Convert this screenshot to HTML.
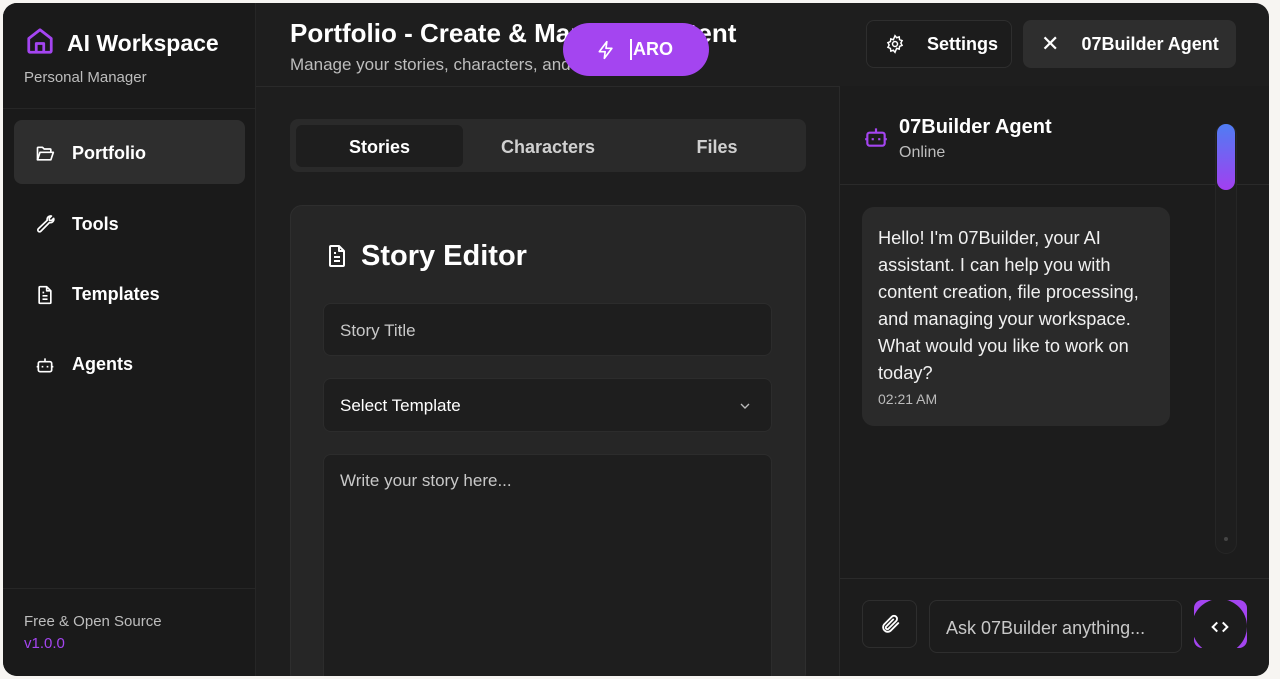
<!DOCTYPE html>
<html style="overflow:hidden"><head><meta charset="utf-8"><style>
*{box-sizing:border-box;margin:0;padding:0}
body{width:1280px;height:679px;background:#f7f5f2;font-family:"Liberation Sans",sans-serif;color:#fff;overflow:hidden;position:relative}
.app{position:absolute;left:3px;top:3px;width:1266px;height:673px;background:#1e1e1e;border-radius:14px;overflow:hidden}
.side{position:absolute;left:0;top:0;width:253px;height:100%;background:#1a1a1a;border-right:1px solid #262626}
.abs{position:absolute}
.nav{position:absolute;left:11px;width:231px;height:64px;border-radius:8px;display:flex;align-items:center;padding-left:21px;padding-top:3px;font-size:18px;font-weight:bold}
.nav svg{margin-right:17px}
.nav.act{background:#2e2e2e}
.btn{position:absolute;top:17px;height:48px;border-radius:8px;display:flex;align-items:center;font-size:18px;font-weight:bold}
.inp{position:absolute;left:320px;width:449px;background:#1e1e1e;border:1px solid #2c2c2c;border-radius:8px;font-size:17px;color:#c8c8c8;padding-left:16px;display:flex;align-items:center}
</style></head><body>
<div class="app">
<div class="side">
 <svg class="abs" style="left:22px;top:23px" width="30" height="30" viewBox="0 0 24 24" fill="none" stroke="#a445f0" stroke-width="2.2" stroke-linejoin="round"><path d="M3 10 12 3l9 7v10a1 1 0 0 1-1 1H4a1 1 0 0 1-1-1z"/><path d="M9 21v-7h6v7"/></svg>
 <div class="abs" style="left:64px;top:27px;font-size:23px;font-weight:bold">AI Workspace</div>
 <div class="abs" style="left:21px;top:66px;font-size:15px;color:#bdbdbd">Personal Manager</div>
 <div class="abs" style="left:0;top:105px;width:253px;border-top:1px solid #262626"></div>
 <div class="nav act" style="top:117px"><svg width="20" height="20" viewBox="0 0 24 24" fill="none" stroke="#fff" stroke-width="2" stroke-linejoin="round"><path d="M3 19V5a1 1 0 0 1 1-1h5l2 2h7a1 1 0 0 1 1 1v2"/><path d="M3 19l3-9h16l-3 9z"/></svg>Portfolio</div>
 <div class="nav" style="top:188px"><svg width="20" height="20" viewBox="0 0 24 24" fill="none" stroke="#fff" stroke-width="2" stroke-linejoin="round"><path d="M14.7 6.3a4 4 0 0 1 5-5l-2.7 2.7.3 2.4 2.4.3 2.7-2.7a4 4 0 0 1-5 5L7 19.5a2 2 0 0 1-3-3z"/></svg>Tools</div>
 <div class="nav" style="top:258px"><svg width="20" height="20" viewBox="0 0 24 24" fill="none" stroke="#fff" stroke-width="2" stroke-linejoin="round"><path d="M14 2H6a1 1 0 0 0-1 1v18a1 1 0 0 0 1 1h12a1 1 0 0 0 1-1V7z"/><path d="M14 2v5h5M9 13h6M9 17h6M9 9h2"/></svg>Templates</div>
 <div class="nav" style="top:328px"><svg width="20" height="20" viewBox="0 0 24 24" fill="none" stroke="#fff" stroke-width="2" stroke-linejoin="round"><rect x="4" y="8" width="16" height="12" rx="2"/><path d="M12 8V4M2 14h2M20 14h2M9 13v2M15 13v2"/></svg>Agents</div>
 <div class="abs" style="left:0;top:585px;width:253px;border-top:1px solid #262626"></div>
 <div class="abs" style="left:21px;top:610px;font-size:15px;color:#bdbdbd">Free &amp; Open Source</div>
 <div class="abs" style="left:21px;top:632px;font-size:15px;color:#a445f0">v1.0.0</div>
</div>
<!-- header -->
<div class="abs" style="left:287px;top:15px;font-size:26px;font-weight:bold;white-space:nowrap">Portfolio - Create &amp; Manage Content</div>
<div class="abs" style="left:287px;top:52px;font-size:17px;color:#bdbdbd;white-space:nowrap">Manage your stories, characters, and files</div>
<div class="abs" style="left:560px;top:20px;width:146px;height:53px;border-radius:27px;background:#a445f0;display:flex;align-items:center;font-size:18px;font-weight:bold"><svg style="margin-left:33px" width="20" height="20" viewBox="0 0 24 24" fill="none" stroke="#fff" stroke-width="2" stroke-linejoin="round"><path d="M13 2 4 14h7l-1 8 9-12h-7z"/></svg><span style="margin-left:14px;border-left:2px solid #fff;padding-left:1px">ARO</span></div>
<div class="btn" style="left:863px;width:146px;border:1px solid #2e2e2e;background:#1c1c1c"><svg style="margin:0 22px 0 18px" width="20" height="20" viewBox="0 0 24 24" fill="none" stroke="#fff" stroke-width="1.8"><circle cx="12" cy="12" r="3"/><path d="M12 2l2 2.5 3-1 .5 3.2 3 1.3-1.5 2.8 1.5 2.8-3 1.3-.5 3.2-3-1L12 22l-2-2.5-3 1-.5-3.2-3-1.3L5 13.2 3.5 10.4l3-1.3L7 5.9l3 1z"/></svg>Settings</div>
<div class="btn" style="left:1020px;width:213px;background:#2e2e2e"><span style="margin:0 22px 0 18px;font-size:22px;font-weight:normal">✕</span>07Builder Agent</div>
<div class="abs" style="left:253px;top:83px;width:1013px;border-top:1px solid #2a2a2a"></div>
<!-- main -->
<div class="abs" style="left:287px;top:116px;width:516px;height:53px;background:#2a2a2a;border-radius:8px"></div>
<div class="abs" style="left:293px;top:122px;width:167px;height:42px;background:#1e1e1e;border-radius:6px"></div>
<div class="abs" style="left:293px;top:134px;width:167px;text-align:center;font-size:18px;font-weight:bold">Stories</div>
<div class="abs" style="left:460px;top:134px;width:170px;text-align:center;font-size:18px;font-weight:bold;color:#d0d0d0">Characters</div>
<div class="abs" style="left:630px;top:134px;width:168px;text-align:center;font-size:18px;font-weight:bold;color:#d0d0d0">Files</div>
<div class="abs" style="left:287px;top:202px;width:516px;height:480px;background:#262626;border:1px solid #2e2e2e;border-radius:12px"></div>
<svg class="abs" style="left:322px;top:241px" width="24" height="24" viewBox="0 0 24 24" fill="none" stroke="#fff" stroke-width="2" stroke-linejoin="round"><path d="M14 2H6a1 1 0 0 0-1 1v18a1 1 0 0 0 1 1h12a1 1 0 0 0 1-1V7z"/><path d="M14 2v5h5M9 13h6M9 17h6M9 9h2"/></svg>
<div class="abs" style="left:358px;top:237px;font-size:29px;font-weight:bold">Story Editor</div>
<div class="inp" style="top:300px;height:53px;padding-top:2px">Story Title</div>
<div class="inp" style="top:375px;height:54px;color:#fff;padding-top:2px">Select Template<svg style="position:absolute;right:18px" width="16" height="16" viewBox="0 0 24 24" fill="none" stroke="#bbb" stroke-width="2"><path d="M6 9l6 6 6-6"/></svg></div>
<div class="inp" style="top:451px;height:240px;align-items:flex-start;padding-top:16px">Write your story here...</div>
<!-- chat -->
<div class="abs" style="left:836px;top:83px;width:430px;height:590px;background:#1c1c1c;border-left:1px solid #2a2a2a"></div>
<svg class="abs" style="left:860px;top:121px" width="26" height="26" viewBox="0 0 24 24" fill="none" stroke="#a445f0" stroke-width="2" stroke-linejoin="round"><rect x="4" y="8" width="16" height="12" rx="2"/><path d="M12 8V4M2 14h2M20 14h2M9 13v2M15 13v2"/></svg>
<div class="abs" style="left:896px;top:113px;font-size:20px;font-weight:bold">07Builder Agent</div>
<div class="abs" style="left:896px;top:141px;font-size:16px;color:#bdbdbd">Online</div>
<div class="abs" style="left:836px;top:181px;width:430px;border-top:1px solid #2a2a2a"></div>
<div class="abs" style="left:1212px;top:121px;width:22px;height:430px;border-radius:11px;background:#1e1e1e;border:1px solid #262626"></div>
<div class="abs" style="left:1214px;top:121px;width:18px;height:66px;border-radius:9px;background:linear-gradient(#4f7df3,#a23ff0)"></div>
<div class="abs" style="left:1221px;top:534px;width:4px;height:4px;border-radius:2px;background:#444"></div>
<div class="abs" style="left:859px;top:204px;width:308px;height:219px;background:#2a2a2a;border-radius:12px;padding:18px 6px 18px 16px;font-size:18.2px;line-height:27px;color:#f0f0f0">Hello! I'm 07Builder, your AI assistant. I can help you with content creation, file processing, and managing your workspace. What would you like to work on today?<div style="font-size:14px;color:#bbb;line-height:20px;margin-top:2px">02:21 AM</div></div>
<div class="abs" style="left:836px;top:575px;width:430px;border-top:1px solid #2a2a2a"></div>
<div class="abs" style="left:859px;top:597px;width:55px;height:48px;border:1px solid #2e2e2e;border-radius:8px;display:flex;align-items:center;justify-content:center"><svg width="22" height="22" viewBox="0 0 24 24" fill="none" stroke="#fff" stroke-width="2" stroke-linecap="round"><path d="M21 11l-8.5 8.5a5 5 0 0 1-7-7L14 4a3.3 3.3 0 0 1 4.7 4.7L10.2 17.2a1.7 1.7 0 0 1-2.4-2.4L15.5 7"/></svg></div>
<div class="abs" style="left:926px;top:597px;width:253px;height:53px;border:1px solid #2e2e2e;border-radius:8px;font-size:18px;color:#c8c8c8;padding:17px 0 0 16px">Ask 07Builder anything...</div>
<div class="abs" style="left:1191px;top:597px;width:53px;height:48px;background:#a445f0;border-radius:8px"></div>
<div class="abs" style="left:1189px;top:596px;width:55px;height:55px;border-radius:50%;background:#1c1c1c;display:flex;align-items:center;justify-content:center"><svg width="22" height="22" viewBox="0 0 24 24" fill="none" stroke="#fff" stroke-width="2.2"><path d="M9 7l-5 5 5 5M15 7l5 5-5 5"/></svg></div>
</div>
</body></html>
